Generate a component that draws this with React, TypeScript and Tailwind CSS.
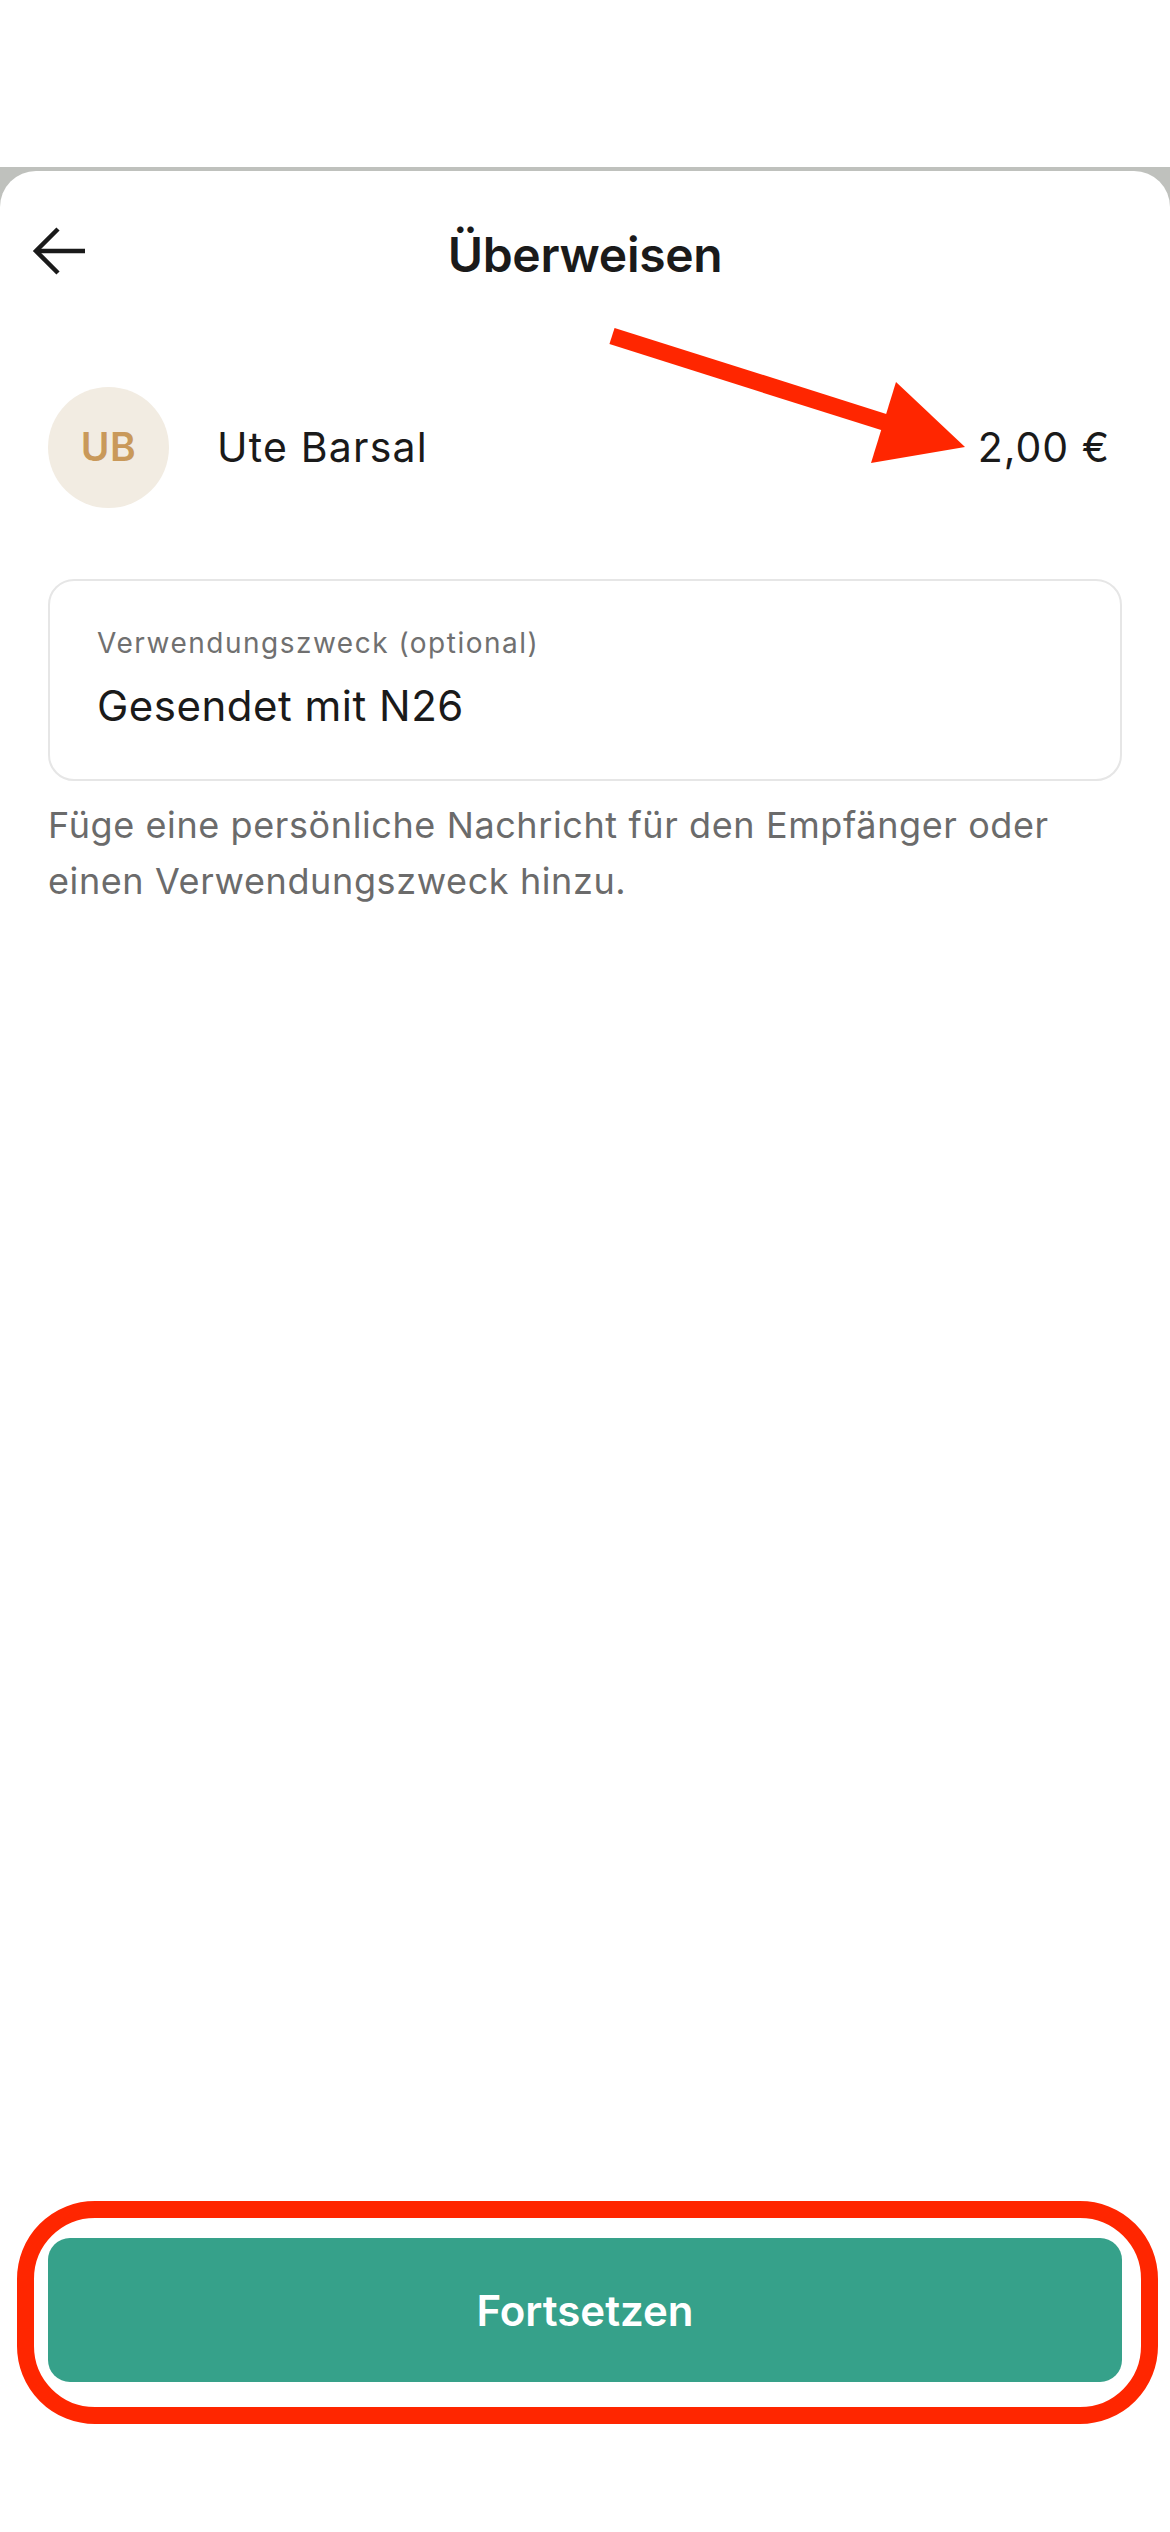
import { useState } from "react";

const font = { fontFamily: "Inter, 'Noto Sans', sans-serif" };

// red annotation arrow drawn over the amount
const PointerArrow = () => (
    <svg className="absolute left-0 top-0 pointer-events-none" width="1170" height="600" viewBox="0 0 1170 600">
        <line x1="612" y1="336" x2="890" y2="424" stroke="#ff2600" strokeWidth="17" />
        <polygon points="896,382 965,447 871,463" fill="#ff2600" />
    </svg>
);

const BackArrow = () => (
    <svg width="60" height="50" viewBox="0 0 60 50" fill="none" stroke="#1a1a1a" strokeWidth="4.5" strokeLinecap="butt">
        <path d="M55 25 H6" />
        <path d="M28 3 L6 25 L28 47" strokeLinejoin="miter" />
    </svg>
);

const App = () => {
    const [purpose, setPurpose] = useState("Gesendet mit N26");

    return (
        <div className="relative w-[1170px] h-[2532px] bg-white flex flex-col overflow-hidden" style={font}>
            {/* empty status area */}
            <div className="h-[167px] shrink-0 bg-white" />

            <div className="flex-1 flex flex-col bg-[#bfc1bd] pt-[4px]">
                <div className="flex-1 flex flex-col bg-white rounded-t-[36px]">

                    {/* Header */}
                    <header className="grid grid-cols-[1fr_auto_1fr] items-center h-[100px] mt-[30px] px-[30px]">
                        <button className="flex items-center justify-start w-[60px] h-[60px]">
                            <BackArrow />
                        </button>
                        <h1 className="text-[48px] leading-[60px] font-semibold text-[#1a1a1a] tracking-[-0.3px] translate-y-[4px]">Überweisen</h1>
                        <div />
                    </header>

                    {/* Recipient */}
                    <section className="flex items-center justify-between mt-[86px] pl-[48px] pr-[60px]">
                        <div className="flex items-center gap-[48px]">
                            <div className="flex items-center justify-center w-[121px] h-[121px] rounded-full bg-[#f2ece2]">
                                <span className="text-[39px] font-semibold text-[#c9995a] tracking-[0.5px]">UB</span>
                            </div>
                            <p className="text-[41px] text-[#1a1a1a] tracking-[1.2px]">Ute Barsal</p>
                        </div>
                        <p className="text-[41px] text-[#1a1a1a] tracking-[1px]">2,00 €</p>
                    </section>

                    {/* Purpose input */}
                    <section className="mt-[71px] px-[48px]">
                        <label className="block h-[202px] border-2 border-[#e6e6e6] rounded-[26px] pt-[45px] pb-[48px] px-[47px]">
                            <span className="block text-[28px] leading-[34px] text-[#707070] tracking-[1.5px]">Verwendungszweck (optional)</span>
                            <input
                                value={purpose}
                                onChange={(e) => setPurpose(e.target.value)}
                                className="block w-full mt-[21px] text-[42px] leading-[50px] h-[50px] text-[#1a1a1a] tracking-[0.5px] outline-none bg-transparent"
                            />
                        </label>
                        <p className="mt-[16px] max-w-[1040px] text-[36px] leading-[56px] text-[#6b6b6b] tracking-[0.6px]">
                            Füge eine persönliche Nachricht für den Empfänger oder<br />einen Verwendungszweck hinzu.
                        </p>
                    </section>

                    {/* Continue */}
                    <section className="mt-auto px-[48px] pb-[150px]">
                        <div className="relative">
                            <button className="w-full h-[144px] rounded-[22px] bg-[#36a18a] text-white text-[42px] font-semibold">
                                Fortsetzen
                            </button>
                            <div className="absolute left-[-31px] top-[-37px] right-[-36px] bottom-[-42px] border-[17px] border-[#ff2600] rounded-[78px] pointer-events-none" />
                        </div>
                    </section>
                </div>
            </div>

            <PointerArrow />
        </div>
    );
};

export default App;
